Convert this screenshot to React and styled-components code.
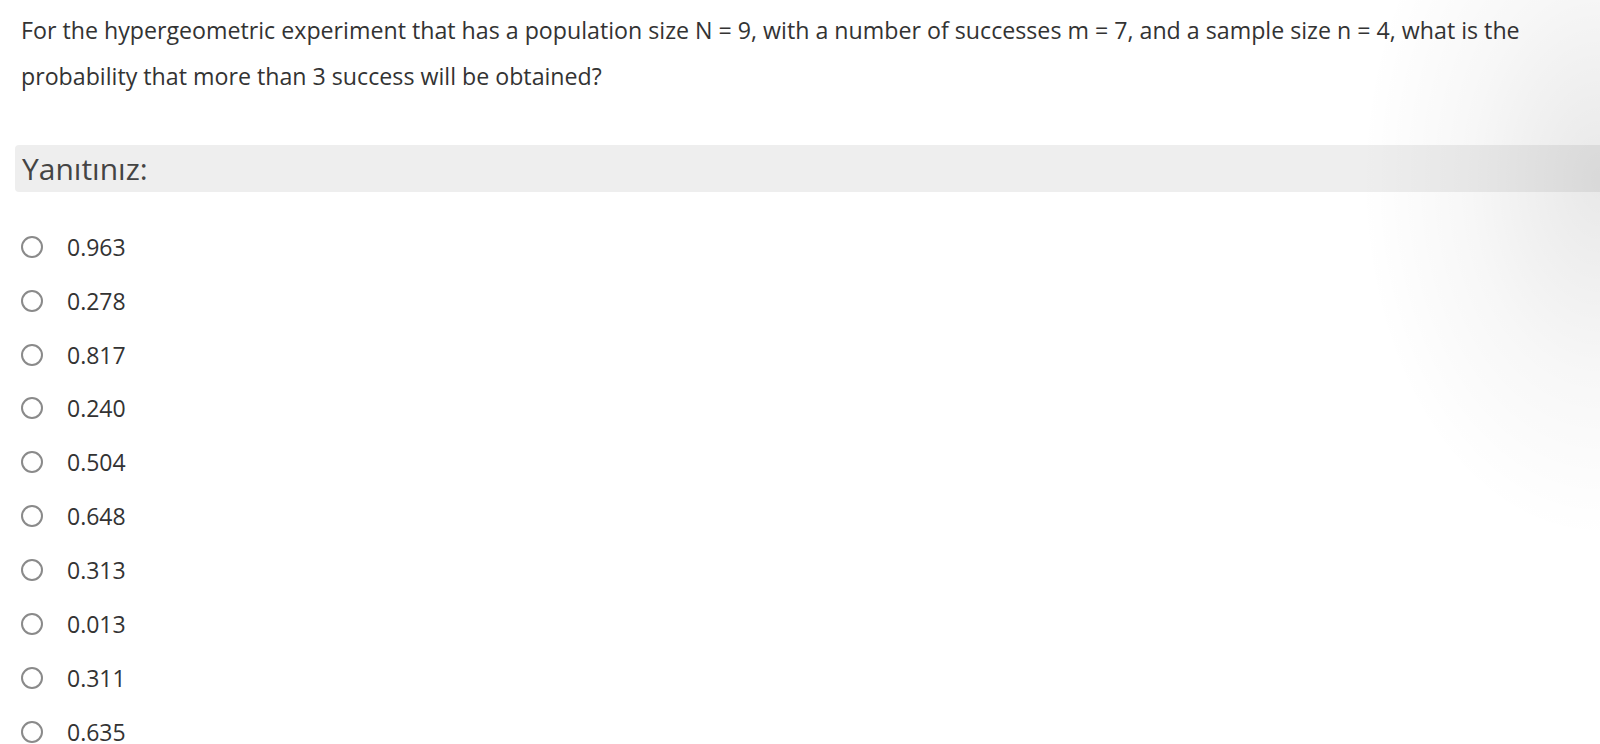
import React from "react";
import styled, { createGlobalStyle } from "styled-components";

const Global = createGlobalStyle`
  html, body { margin: 0; padding: 0; background: #ffffff; }
  body { font-family: "Open Sans", "Noto Sans", sans-serif; color: #333; }
`;

const Page = styled.div`
  position: relative;
  min-height: 744px;
  padding-top: 7px;
  box-sizing: border-box;
`;

const Vignette = styled.div`
  position: absolute;
  inset: 0;
  pointer-events: none;
  background: radial-gradient(ellipse 240px 360px at 100% 180px, rgba(0,0,0,0.09), rgba(0,0,0,0.03) 55%, rgba(0,0,0,0) 100%);
`;

const Question = styled.p`
  margin: 0;
  padding: 0 20px 0 21px;
  font-size: 23.2px;
  line-height: 46px;
  color: #333;
`;

const AnswerBar = styled.div`
  margin: 46px 0 0 15px;
  height: 47px;
  background: #eeeeee;
  border-radius: 4px 0 0 4px;
  padding-left: 7px;
  font-size: 30px;
  line-height: 47px;
  color: #444;
`;

const Options = styled.div`
  display: flex;
  flex-direction: column;
  margin-top: 28px;
`;

const Option = styled.label`
  display: flex;
  align-items: center;
  height: 53.85px;
  padding-left: 21px;
  gap: 24px;
  font-size: 23px;
  color: #333;
`;

const Radio = styled.span`
  width: 22px;
  height: 22px;
  box-sizing: border-box;
  border: 2px solid #8a8a8a;
  border-radius: 50%;
  flex-shrink: 0;
`;

const values = ["0.963", "0.278", "0.817", "0.240", "0.504", "0.648", "0.313", "0.013", "0.311", "0.635"];

export default function App() {
  return (
    <>
      <Global />
      <Page>
        <Question>
          For the hypergeometric experiment that has a population size N = 9, with a number of successes m = 7, and a sample size n = 4, what is the probability that more than 3 success will be obtained?
        </Question>
        <AnswerBar>Yanıtınız:</AnswerBar>
        <Options>
          {values.map((v) => (
            <Option key={v}>
              <Radio />
              <span>{v}</span>
            </Option>
          ))}
        </Options>
        <Vignette />
      </Page>
    </>
  );
}
